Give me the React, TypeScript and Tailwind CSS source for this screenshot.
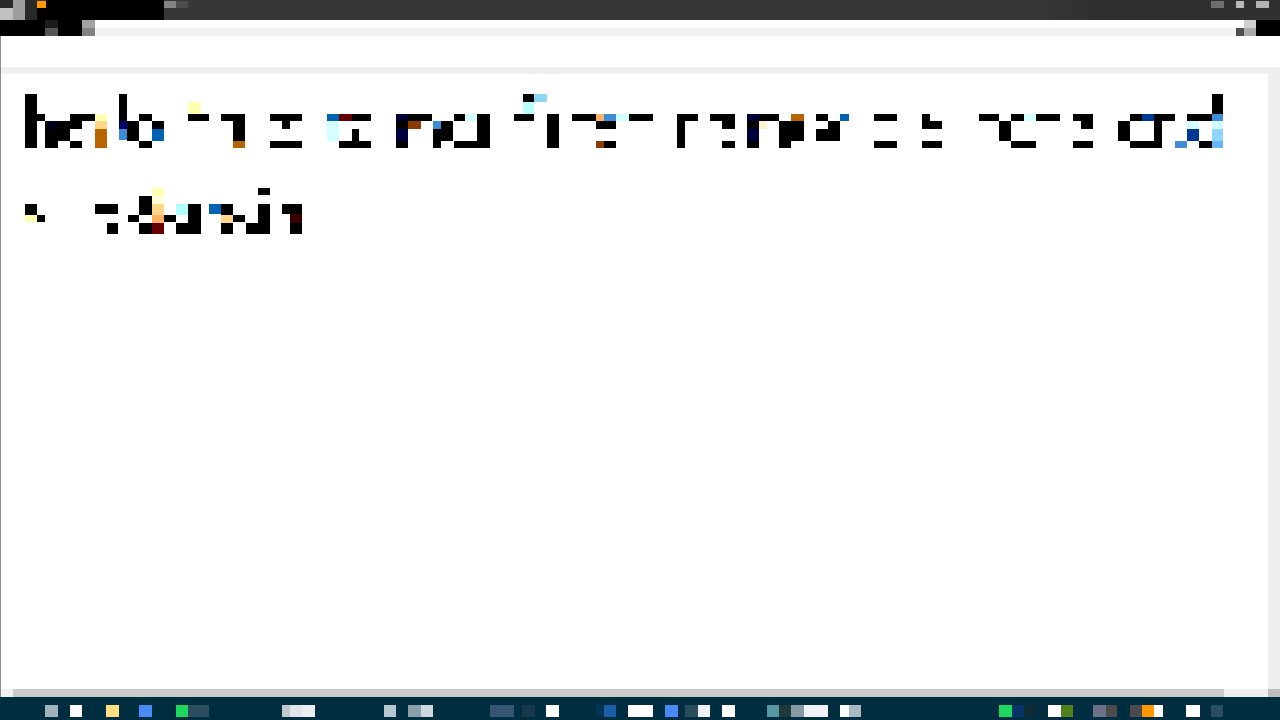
import React from 'react';

// x, y, width, height, fill (black when left out)
type Cell = [number, number, number, number, string?];

const firstLine: Cell[] = [
    [25, 94, 12, 54], [37, 114, 8, 7], [45, 121, 25, 20], [48, 121, 10, 8, '#00001c'], [45, 141, 13, 7],
    [70, 114, 25, 7], [70, 121, 12, 8], [70, 141, 12, 7],
    [95, 114, 12, 7, '#ffffb2'], [95, 121, 12, 8, '#ffd78a'], [95, 129, 12, 19, '#b66500'],
    [119, 94, 8, 27], [119, 121, 8, 8, '#00006a'], [119, 129, 8, 11, '#3b8cd9'], [127, 121, 12, 20],
    [139, 114, 13, 7], [139, 141, 13, 7], [152, 121, 12, 8], [152, 129, 12, 12, '#0062b5'],
    [188, 102, 13, 12, '#ffffb2'], [188, 114, 21, 7],
    [221, 114, 24, 7], [233, 121, 12, 20], [233, 141, 12, 7, '#b66500'],
    [270, 114, 32, 7], [282, 121, 8, 8], [270, 141, 32, 7],
    [327, 114, 12, 7, '#0062b5'], [327, 121, 12, 20, '#d4ffff'], [339, 114, 13, 7, '#660000'],
    [352, 114, 19, 7], [352, 129, 7, 12], [339, 141, 32, 7],
    [396, 114, 12, 34], [396, 114, 12, 7, '#000036'], [396, 129, 12, 12, '#000040'],
    [408, 114, 24, 7], [408, 121, 13, 8, '#8e3900'],
    [433, 121, 8, 8, '#3b8cd9'], [433, 129, 8, 19], [441, 121, 12, 20],
    [454, 114, 11, 7], [465, 114, 12, 7, '#d4ffff'], [477, 114, 13, 34], [454, 141, 23, 7],
    [523, 94, 11, 8], [534, 94, 13, 8, '#8dd5f5'], [523, 102, 11, 12, '#b8ffff'],
    [514, 114, 20, 7], [547, 114, 12, 34],
    [572, 114, 24, 7], [596, 114, 8, 7, '#ffb266'], [604, 114, 12, 7, '#3b8cd9'], [616, 114, 13, 7, '#d4ffff'],
    [629, 114, 24, 7], [596, 121, 20, 8], [596, 141, 8, 7, '#8e3900'], [604, 141, 12, 7],
    [677, 114, 21, 7], [677, 121, 8, 27],
    [710, 114, 25, 7], [722, 121, 13, 8], [722, 141, 13, 7],
    [747, 114, 12, 34], [747, 114, 12, 7, '#000036'], [747, 129, 12, 12, '#000040'],
    [759, 114, 20, 7], [759, 121, 8, 8, '#fff5cc'],
    [779, 121, 12, 27], [791, 114, 13, 7, '#b66500'], [791, 121, 13, 20],
    [816, 114, 12, 7], [828, 121, 12, 8], [816, 129, 24, 12], [840, 114, 9, 7, '#0062b5'],
    [874, 114, 23, 7], [874, 141, 23, 7],
    [922, 114, 8, 7], [922, 121, 20, 8], [922, 141, 20, 7],
    [979, 114, 20, 7], [999, 121, 12, 20], [1011, 114, 13, 7], [1024, 114, 12, 7, '#d4ffff'],
    [1036, 114, 24, 7], [1011, 141, 25, 7],
    [1073, 114, 20, 7], [1081, 121, 12, 8], [1073, 141, 20, 7],
    [1118, 121, 12, 20], [1130, 114, 12, 7], [1142, 114, 12, 7, '#003994'], [1154, 114, 21, 7],
    [1154, 121, 8, 27], [1130, 141, 24, 7],
    [1175, 141, 12, 7, '#448cd5'], [1187, 114, 25, 7], [1187, 121, 12, 8, '#d4ffff'],
    [1187, 129, 12, 12, '#003994'], [1199, 141, 13, 7],
    [1212, 94, 11, 20], [1212, 114, 11, 7, '#3b8cd9'], [1212, 121, 11, 8, '#d0fbff'],
    [1212, 129, 11, 12, '#8fd5ff'], [1212, 141, 11, 7, '#66b5fa'],
];

const secondLine: Cell[] = [
    [25, 204, 12, 11], [25, 215, 12, 7, '#ffffb2'], [37, 215, 8, 7],
    [95, 204, 23, 10], [107, 223, 11, 11],
    [128, 215, 11, 7], [139, 196, 13, 19], [139, 223, 13, 11],
    [152, 187, 12, 9, '#ffffb2'], [152, 196, 12, 8, '#ffffdc'], [152, 204, 12, 11, '#ffd78a'],
    [152, 215, 12, 8, '#ffb266'], [152, 223, 12, 11, '#660000'],
    [164, 215, 12, 7], [176, 204, 12, 11, '#b0ffff'], [176, 223, 12, 11], [188, 204, 13, 30],
    [209, 204, 12, 10, '#0062b5'], [221, 204, 12, 11], [221, 215, 12, 8, '#ffd78a'], [221, 223, 12, 11],
    [233, 215, 12, 7], [246, 223, 12, 11], [258, 188, 12, 7], [258, 204, 12, 30],
    [282, 204, 20, 10], [290, 214, 12, 9, '#3a0000'], [290, 223, 12, 11],
];

const titleCells: Cell[] = [
    [0, 0, 37, 20, '#282828'], [13, 0, 12, 20, '#9e9e9e'], [0, 8, 13, 12, '#c0c0c0'],
    [37, 8, 127, 12], [46, 0, 118, 8], [37, 1, 9, 7, '#ff9800'],
    [164, 1, 12, 7, '#848484'], [176, 1, 12, 7, '#4c4c4c'],
];

const windowButtons: Cell[][] = [
    [[0, 1, 13, 7, '#6e6e6e']],
    [[0, 1, 8, 7, '#b6b6b6']],
    [[0, 1, 13, 7, '#b2b2b2']],
];

const menuCells: Cell[] = [
    [0, 0, 82, 16], [45, 0, 13, 8, '#1c1c1c'], [45, 8, 13, 8, '#545454'],
    [82, 0, 13, 8, '#a2a2a2'], [82, 8, 13, 8, '#828282'],
];

const menuEndCells: Cell[] = [
    [0, 8, 8, 8, '#505050'], [8, 0, 12, 8, '#d0d0d0'], [8, 8, 12, 8, '#a9a9a9'], [20, 0, 24, 16],
];

const launchers: Cell[] = [
    [0, 0, 13, 12, '#a0b3bd'], [25, 0, 12, 12, '#ffffff'], [61, 0, 13, 12, '#ffdf80'],
    [94, 0, 13, 12, '#4a8af4'], [131, 0, 12, 12, '#1ed75f'], [143, 0, 21, 12, '#2a4d60'],
];

const openWindows: Cell[] = [
    [0, 0, 8, 12, '#c0c9cd'], [8, 0, 12, 12, '#dfe5e8'], [20, 0, 13, 12, '#eaeef0'],
    [102, 0, 12, 12, '#b8c6d0'], [126, 0, 13, 12, '#8a9fa9'], [139, 0, 12, 12, '#cdd9df'],
];

const pinned: Cell[] = [
    [0, 0, 24, 12, '#365473'], [32, 0, 13, 12, '#16384a'], [56, 0, 13, 12, '#ffffff'],
    [106, 0, 8, 12, '#043356'], [114, 0, 12, 12, '#1a5fa8'], [138, 0, 25, 12, '#ffffff'],
    [175, 0, 13, 12, '#4a8af4'], [195, 0, 13, 12, '#2a4d5e'], [208, 0, 12, 12, '#f0f3f5'],
    [232, 0, 13, 12, '#ffffff'],
];

const status: Cell[] = [
    [0, 0, 12, 12, '#5896a4'], [12, 0, 12, 12, '#203838'], [24, 0, 13, 12, '#889ba2'],
    [37, 0, 24, 12, '#f0f2f5'], [73, 0, 9, 12, '#ffffff'], [82, 0, 12, 12, '#a9bac2'],
];

const tray: Cell[] = [
    [0, 0, 13, 12, '#1ed75f'], [13, 0, 12, 12, '#073368'], [25, 0, 12, 12, '#0c2b34'],
    [49, 0, 13, 12, '#ffffff'], [62, 0, 12, 12, '#50801c'], [94, 0, 13, 12, '#6c7088'],
    [107, 0, 11, 12, '#4c4c4f'], [131, 0, 12, 12, '#4c4a4c'], [143, 0, 12, 12, '#ff9800'],
    [155, 0, 9, 12, '#ffffff'], [187, 0, 14, 12, '#ffffff'], [212, 0, 12, 12, '#2a4d60'],
];

const Mosaic = ({ cells, width, height, left = 0, top = 0 }: { cells: Cell[]; width: number; height: number; left?: number; top?: number }) => (
    <svg
        className="block shrink-0"
        width={width}
        height={height}
        viewBox={`${left} ${top} ${width} ${height}`}
        shapeRendering="crispEdges"
        aria-hidden="true"
    >
        {cells.map(([x, y, w, h, fill], i) => (
            <rect key={i} x={x} y={y} width={w} height={h} fill={fill || '#000000'} />
        ))}
    </svg>
);

const TitleBar = () => (
    <header className="flex h-5 justify-between bg-linear-to-r from-[#363836] from-80% to-[#303030] to-85%">
        <Mosaic cells={titleCells} width={188} height={20} />
        <div className="flex gap-3 pr-[11px]">
            {windowButtons.map((cells, i) => (
                <button key={i} type="button" aria-label={['Minimize', 'Maximize', 'Close'][i]}>
                    <Mosaic cells={cells} width={i === 1 ? 8 : 13} height={20} />
                </button>
            ))}
        </div>
    </header>
);

const MenuBar = () => (
    <div className="flex h-4">
        <Mosaic cells={menuCells} width={95} height={16} />
        <div className="flex-1 border-b-8 border-[#f2f2f2] bg-white" />
        <Mosaic cells={menuEndCells} width={44} height={16} />
    </div>
);

const Taskbar = () => (
    <footer className="flex h-[23px] items-start justify-between bg-[#002d3f] pt-2 pr-[57px] pl-[45px]">
        <div className="flex">
            <button type="button" aria-label="Launchers" className="mr-[73px]">
                <Mosaic cells={launchers} width={164} height={12} />
            </button>
            <button type="button" aria-label="Open windows" className="mr-[57px]">
                <Mosaic cells={openWindows} width={151} height={12} />
            </button>
            <button type="button" aria-label="Pinned" className="mr-8">
                <Mosaic cells={pinned} width={245} height={12} />
            </button>
            <button type="button" aria-label="Status">
                <Mosaic cells={status} width={94} height={12} />
            </button>
        </div>
        <button type="button" aria-label="Tray">
            <Mosaic cells={tray} width={224} height={12} />
        </button>
    </footer>
);

const App = () => {
    return (
        <div className="flex h-screen flex-col overflow-hidden bg-white">
            <TitleBar />
            <MenuBar />
            <div className="flex min-h-0 flex-1 flex-col border-l border-[#8c8c8c]">
                <div className="h-[31px] bg-white" />
                <div className="h-[7px] bg-[#efefef]" />
                <div className="flex min-h-0 flex-1">
                    <main className="min-w-0 flex-1 overflow-hidden bg-white pt-5 pl-6">
                        <Mosaic cells={firstLine} width={1198} height={54} left={25} top={94} />
                        <div className="pt-10">
                            <Mosaic cells={secondLine} width={277} height={46} left={25} top={188} />
                        </div>
                    </main>
                    <div className="w-3 bg-[#eeeeee]" />
                </div>
                <div className="flex h-2 bg-[#efefef] pl-3">
                    <div className="mr-11 flex-1 bg-[#c9c9c9]" />
                    <div className="w-3 bg-[#bdbdbd]" />
                </div>
            </div>
            <Taskbar />
        </div>
    );
};

export default App;
